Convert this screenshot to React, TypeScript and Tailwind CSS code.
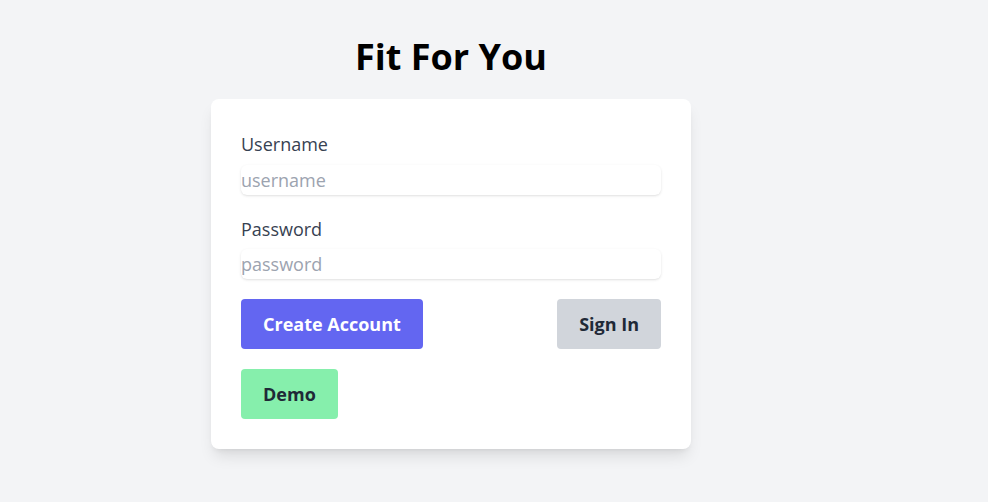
export default function App() {
  return (
    <div className="min-h-screen bg-[#f3f4f6] font-['Open_Sans',sans-serif]">
      <div className="ml-[211px] w-[480px] pt-[37px]">
        <h1 className="text-center text-4xl leading-10 font-bold text-black">Fit For You</h1>
        <form className="mt-[22px] rounded-lg bg-white px-[30px] pt-[31px] pb-[30px] shadow-lg">
          <div className="flex flex-col">
            <label className="text-lg leading-7 text-[#374151]">Username</label>
            <input
              className="mt-[7px] h-[30px] rounded-md text-lg text-[#374151] shadow-sm outline-none placeholder:text-[#9ca3af]"
              placeholder="username"
            />
          </div>
          <div className="mt-5 flex flex-col">
            <label className="text-lg leading-7 text-[#374151]">Password</label>
            <input
              type="password"
              className="mt-[6px] h-[30px] rounded-md text-lg text-[#374151] shadow-sm outline-none placeholder:text-[#9ca3af]"
              placeholder="password"
            />
          </div>
          <div className="mt-5 flex items-center justify-between">
            <button type="button" className="h-[50px] rounded bg-[#6366f1] px-[22px] text-lg font-bold text-white">
              Create Account
            </button>
            <button type="button" className="h-[50px] rounded bg-[#d1d5db] px-[22px] text-lg font-bold text-[#1f2937]">
              Sign In
            </button>
          </div>
          <div className="mt-5">
            <button type="button" className="h-[50px] rounded bg-[#86efac] px-[22px] text-lg font-bold text-[#1f2937]">
              Demo
            </button>
          </div>
        </form>
      </div>
    </div>
  );
}
